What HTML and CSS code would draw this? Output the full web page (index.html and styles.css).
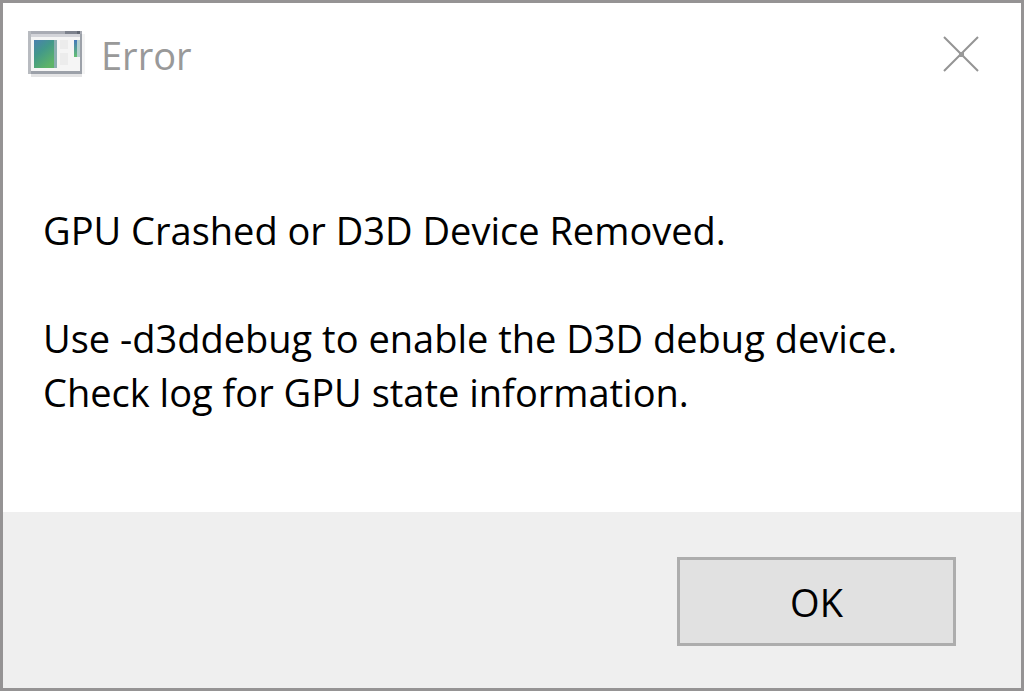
FILE: index.html
```html
<!DOCTYPE html>
<html lang="en">
<head>
<meta charset="utf-8">
<title>Error</title>
<link rel="stylesheet" href="styles.css">
</head>
<body>
<section class="dialog" role="alertdialog" aria-labelledby="title" aria-describedby="message">
  <header class="titlebar">
    <svg class="app-icon" viewBox="0 0 57 46" shape-rendering="crispEdges" aria-hidden="true">
      <defs>
        <linearGradient id="pane" x1="0" y1="0" x2="0.6" y2="1"><stop offset="0" stop-color="#4a80b0"/><stop offset="0.45" stop-color="#42988a"/><stop offset="1" stop-color="#5db468"/></linearGradient>
        <linearGradient id="bar" x1="0" y1="0" x2="0" y2="1"><stop offset="0" stop-color="#4478bc"/><stop offset="1" stop-color="#62c070"/></linearGradient>
      </defs>
      <path fill="#e4e4e5" d="M3 43h51v3H3z"/>
      <path fill="#f4f4f4" d="M54 3h3v40h-3z"/>
      <path fill="#b8bbc0" d="M0 0h54v43H0z"/>
      <path fill="#a9acb4" d="M3 0h51v3H3z"/>
      <path fill="#7d828d" d="M37 0h12v3H37z"/>
      <path fill="#626873" d="M49 0h3v3h-3z"/>
      <path fill="#d3d4d9" d="M3 3h49v3H3z"/>
      <path fill="#f5f5f5" d="M3 6h49v34H3z"/>
      <path fill="#9ca1a9" d="M3 40h51v3H3zM52 3h2v40h-2z"/>
      <path fill="#8aaeb0" d="M6 9h23v28H6z"/>
      <path fill="url(#pane)" d="M6 9h20v28H6z"/>
      <path fill="#ececec" d="M32 9h8v9h-8zM32 22h8v12h-8z"/>
      <path fill="url(#bar)" d="M46 9h3v17h-3z"/>
      <path fill="#b5d0cf" d="M49 9h3v17h-3z"/>
    </svg>
    <h1 class="title" id="title">Error</h1>
    <button class="close" type="button" aria-label="Close">
      <svg viewBox="0 0 36 36" aria-hidden="true"><path d="M1 1L35 35M35 1L1 35" stroke="#949494" stroke-width="2" fill="none"/><path d="M16 16h5v5h-5z" fill="#999"/></svg>
    </button>
  </header>
  <main class="message" id="message">
    <p>GPU Crashed or D3D Device Removed.</p>
    <p>Use -d3ddebug to enable the D3D debug device.<br>Check log for GPU state information.</p>
  </main>
  <footer class="actions"><button class="ok" type="button">OK</button></footer>
</section>
</body>
</html>
```
FILE: styles.css
```css
* { box-sizing: border-box; }
body { margin: 0; font-family: "Open Sans", "Noto Sans", sans-serif; color: #000; }
.dialog { display: flex; flex-direction: column; min-height: 100vh; border: 3px solid #959394; background: #fff; }
.titlebar { display: flex; align-items: center; gap: 16px; padding: 21px 42px 19px 25px; }
.app-icon { width: 57px; height: 46px; }
.title { flex: 1; margin: 0; padding-top: 2px; font-size: 38px; line-height: 58px; font-weight: 400; color: #999; }
.close { display: flex; padding: 0; border: 0; background: none; }
.close svg { width: 36px; height: 36px; }
.message { flex: 1; padding: 100px 40px 80px; font-size: 38px; line-height: 54px; }
.message p { margin: 0 0 54px; }
.message p:last-child { margin: 0; }
.actions { display: flex; justify-content: flex-end; padding: 45px 65px 42px; background: #efefef; }
.ok { width: 279px; height: 89px; padding: 0; border: 3px solid #adadad; background: #e1e1e1; color: #000; font: inherit; font-size: 38px; }
```
